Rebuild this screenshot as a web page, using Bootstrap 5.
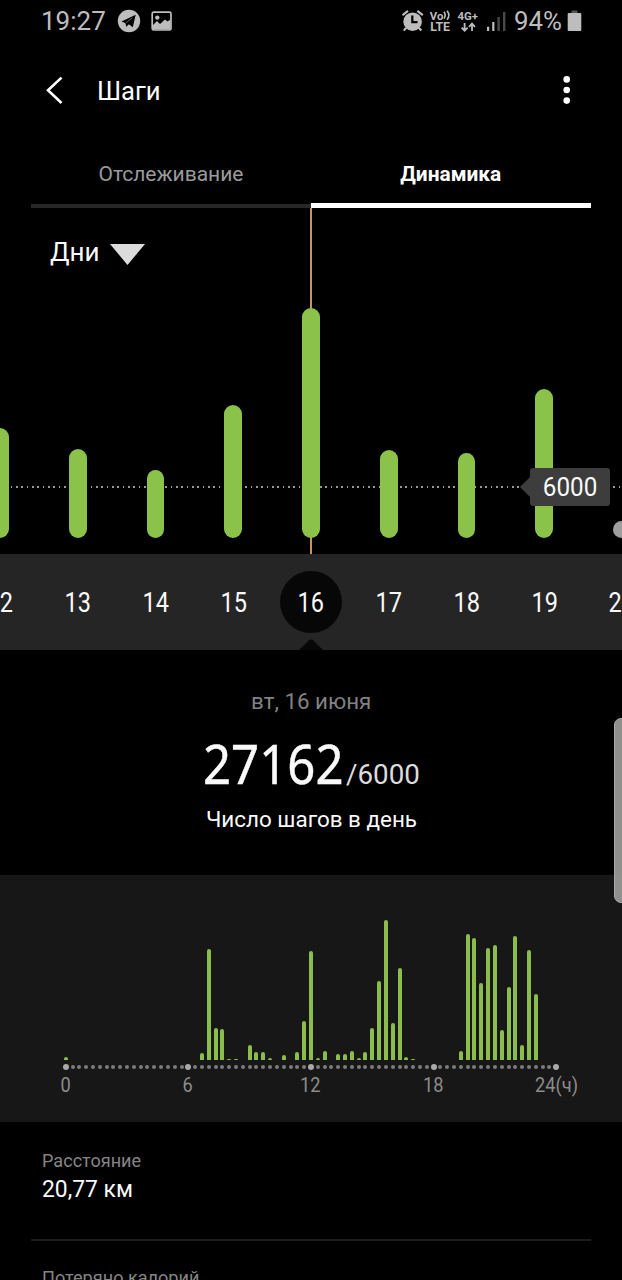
<!DOCTYPE html>
<html lang="ru" data-bs-theme="dark">
<head>
<meta charset="utf-8">
<meta name="viewport" content="width=device-width, initial-scale=1">
<title>Шаги</title>
<link href="https://cdn.jsdelivr.net/npm/bootstrap@5.3.0/dist/css/bootstrap.min.css" rel="stylesheet">
<style>
  html, body { height: 1280px; overflow: hidden; background: #000; }
  body { width: 622px; font-family: Roboto, "Liberation Sans", sans-serif; color: #fafafa; line-height: 1; }
  .tx { display: inline-block; white-space: nowrap; transform: scaleX(var(--sx, 1)); transform-origin: left center; }
  .txc { transform-origin: center; }
  .sx-date { --sx: .84; }
  .sx-big { --sx: .885; }
  .sx-name { --sx: .978; }
  .sx-val { --sx: .933; }
  .sx-tick { --sx: .91; }
  .status { height: 42px; padding-left: 41px; color: #bdbdbd; }
  .status .clock { font-size: 26px; width: 76px; }
  .status svg { display: block; flex: none; }
  .status .sysicons { margin-left: 229px; }
  .topbar { height: 98px; }
  .topbar h1 { font-size: 26px; font-weight: 400; margin: 2px 0 0 33px; --sx: .985; }
  .topbar .back { margin-left: 44px; }
  .topbar .more { margin-right: 50px; }
  .tabs { height: 68px; margin: 0 31px; }
  .tabs .tab { font-size: 21px; padding-top: 4px; color: #9a9a9a; border-bottom: 4px solid #272727; }
  .tabs .tab.on { color: #fff; font-weight: 700; padding-top: 5px; border-bottom: 5px solid #fff; --sx: .995; }
  .daychart { height: 346px; }
  .marker { position: absolute; left: 310px; top: 0; width: 2px; height: 100%; background: #c69464; }
  .period { position: absolute; left: 50px; top: 30px; font-size: 26px; }
  .period svg { margin: 4px 0 0 10px; }
  .goal-line { position: absolute; left: 0; top: 278px; width: 100%; height: 2px;
    background: repeating-linear-gradient(90deg, #999 0 1.6px, transparent 1.6px 5.333px); }
  .daybars { position: absolute; left: -38.875px; bottom: 16px; width: 699.75px; }
  .daybars > div { width: 77.75px; }
  .daybar { width: 17.6px; border-radius: 9px; background: #8bc34a; margin: 0 auto; }
  .daybar.none { background: #9e9e9e; }
  .goal { position: absolute; left: 530px; top: 260px; width: 80px; height: 38px; border-radius: 3px; background: #3d3d3d; font-size: 25px; --sx: .97; }
  .goal::before { content: ""; position: absolute; left: -10px; top: 9px; border: 10px solid transparent; border-left: 0; border-right-color: #3d3d3d; }
  .dates { height: 96px; background: #252525; overflow: hidden; }
  .dates .strip { margin-left: -38.875px; width: 699.75px; height: 96px; flex: none; }
  .dates .day { width: 77.75px; height: 62px; font-size: 28px; }
  .dates .day .disc { width: 62px; height: 62px; border-radius: 50%; padding-top: 1px; }
  .dates .on .disc { background: #070707; }
  .notch { position: absolute; left: 299px; bottom: 0; }
  .summary { height: 225px; padding-top: 41px; }
  .summary .when { font-size: 22px; color: #828282; line-height: 22px; --sx: 1.015; }
  .summary .count { height: 60px; margin-top: 20px; width: 216px; margin-left: 203px; }
  .summary .big { font-family: "Noto Sans", sans-serif; font-weight: 400; -webkit-text-stroke: .5px #fafafa; font-size: 55.5px; line-height: 60px; width: 142.6px; }
  .summary .of { font-size: 27.5px; color: #dcdcdc; --sx: 1.01; }
  .summary .cap { font-size: 22px; line-height: 22px; margin-top: 16px; --sx: 1.02; }
  .hours { height: 247px; background: #171717; }
  .hourbars { padding: 36px 0 0 62.3px; height: 185px; }
  .hourbars > i { width: 6.817px; flex: none; display: block; }
  .hourbars b { display: block; width: 4px; margin: 0 auto; border-radius: 2px 2px 0 0; background: #8bbd4c; }
  .axis { height: 14px; padding-left: 62.3px; }
  .axis > i { width: 6.817px; flex: none; }
  .axis b { width: 4px; height: 4px; border-radius: 50%; background: #7c7c7c; }
  .axis i.major b { width: 6px; height: 6px; background: #aaa; }
  .ticks { font-size: 20px; color: #8c8c8c; margin-left: 4px; padding-top: 1px; }
  .ticks > div { width: 122.7px; text-align: center; flex: none; }
  .metric { margin: 0 31px; padding: 27px 11px 0; }
  .metric:first-child { height: 117px; padding-top: 29px; }
  .metric + .metric { border-top: 2px solid #1b1b1b; }
  .metric .name { font-size: 18.5px; line-height: 20px; color: #858585; }
  .metric .val { font-size: 24.5px; line-height: 28px; margin-top: 4px; }
  .edge { position: absolute; left: 613.5px; top: 718px; width: 14px; height: 185px; border-radius: 9px; background: rgba(158,158,156,.9); border: 1px solid #aaa; }
</style>
</head>
<body class="position-relative m-0">
<header>
  <div class="status d-flex align-items-center">
    <span class="clock">19:27</span>
    <svg width="24" height="24" viewBox="0 0 24 24"><circle cx="12" cy="12" r="11.2" fill="#bdbdbd"/><path d="M4.5 12.5 18.7 5.7 15.8 18.2 11.9 15.2 9.4 17.8 8.3 13.9Z" fill="#000"/><path d="M9 13.8 15.4 8.8" stroke="#bdbdbd" stroke-width=".5"/></svg>
    <svg class="ms-2" width="24" height="24" viewBox="0 0 24 24"><rect x="3.2" y="3.2" width="18.8" height="17.8" rx="1.5" fill="none" stroke="#bdbdbd" stroke-width="1.7"/><circle cx="8.3" cy="8.6" r="2.2" fill="#bdbdbd"/><path d="M4 16 8 12 11 15 16 10.5 18.5 12.5 21.5 10.5V20.5H4Z" fill="#bdbdbd"/></svg>
    <svg class="sysicons" width="184" height="30" viewBox="402 6 184 30" fill="#bdbdbd" font-family="Roboto, sans-serif">
      <circle cx="412.6" cy="21.7" r="9.3"/><path d="M402.5 15.2 408 10.8M422.8 15.2 417.3 10.8" stroke="#bdbdbd" stroke-width="2.2"/><path d="M406 28 403.8 30.6M419 28 421.3 30.6" stroke="#bdbdbd" stroke-width="2.2"/><path d="M412.3 15.5V22.2H417.5" fill="none" stroke="#000" stroke-width="2.2"/>
      <text x="429.8" y="19.5" font-size="11.5" font-weight="700" textLength="13.5" lengthAdjust="spacingAndGlyphs">Vo</text>
      <path d="M444 11.8Q446.3 15.2 444 18.6M447 10.8Q450.8 15.2 447 19.8" fill="none" stroke="#bdbdbd" stroke-width="1.6"/>
      <text x="430.2" y="31" font-size="12" font-weight="700" textLength="19.8" lengthAdjust="spacingAndGlyphs">LTE</text>
      <text x="457.5" y="20" font-size="11.5" font-weight="700" textLength="20.5" lengthAdjust="spacingAndGlyphs">4G+</text>
      <path d="M464.6 23V30M461.6 27.6 464.6 30.8 467.6 27.6M472 31V24M469 26.8 472 23.6 475 26.8" fill="none" stroke="#bdbdbd" stroke-width="1.8"/>
      <path d="M487 26.8h2.2v4.2H487ZM492.2 22h2.2v9h-2.2Z"/><path d="M497.4 17h2.4v14h-2.4ZM503 12h2.4v19H503Z" fill="#494949"/>
      <text x="514" y="30.3" font-size="26" textLength="48" lengthAdjust="spacingAndGlyphs">94%</text>
      <path d="M571.5 10.5h6V13h-6Z" fill="#555"/><rect x="567.7" y="13" width="13.6" height="18" rx="1"/>
    </svg>
  </div>
  <nav class="topbar d-flex align-items-center">
    <svg class="back" width="20" height="30" viewBox="0 0 20 30"><path d="M17.5 1.6 4 14.3 17.5 27" fill="none" stroke="#fff" stroke-width="2.6"/></svg>
    <h1><span class="tx">Шаги</span></h1>
    <svg class="more ms-auto" width="10" height="30" viewBox="0 0 10 30" fill="#fff"><circle cx="4.7" cy="3.4" r="3.3"/><circle cx="4.7" cy="14" r="3.3"/><circle cx="4.7" cy="24.6" r="3.3"/></svg>
  </nav>
  <div class="tabs row g-0">
    <div class="tab col-6 d-flex align-items-center justify-content-center"><span class="tx txc">Отслеживание</span></div>
    <div class="tab on col-6 d-flex align-items-center justify-content-center"><span class="tx txc">Динамика</span></div>
  </div>
</header>
<main>
  <section class="daychart position-relative overflow-hidden">
    <div class="goal-line"></div>
    <div class="marker"></div>
    <div class="period d-flex align-items-center"><span class="tx">Дни</span><svg width="36" height="24" viewBox="0 0 36 24"><path d="M0 2H35L17.5 23Z" fill="#dcdcdc"/></svg></div>
    <div class="daybars d-flex align-items-end" id="daybars"></div>
    <div class="goal d-flex align-items-center justify-content-center"><span class="tx txc">6000</span></div>
  </section>
  <section class="dates position-relative">
    <div class="strip d-flex align-items-center" id="dates"></div>
    <svg class="notch" width="24" height="11" viewBox="0 0 24 11"><path d="M0 11 10 1.2Q12 -.4 14 1.2L24 11Z" fill="#070707"/></svg>
  </section>
  <section class="summary text-center">
    <div class="when"><span class="tx txc">вт, 16 июня</span></div>
    <div class="count d-flex align-items-baseline"><span class="big text-start"><span class="tx sx-big">27162</span></span><span class="of tx">/6000</span></div>
    <div class="cap"><span class="tx txc">Число шагов в день</span></div>
  </section>
  <section class="hours">
    <div class="hourbars d-flex align-items-end" id="hourbars"></div>
    <div class="axis d-flex align-items-center" id="axis"></div>
    <div class="ticks d-flex"><div><span class="tx txc sx-tick">0</span></div><div><span class="tx txc sx-tick">6</span></div><div><span class="tx txc sx-tick">12</span></div><div><span class="tx txc sx-tick">18</span></div><div><span class="tx txc sx-tick">24(ч)</span></div></div>
  </section>
  <section>
    <div class="metric"><div class="name"><span class="tx sx-name">Расстояние</span></div><div class="val"><span class="tx sx-val">20,77 км</span></div></div>
    <div class="metric"><div class="name"><span class="tx sx-name">Потеряно калорий</span></div></div>
  </section>
</main>
<div class="edge"></div>
<script src="https://cdn.jsdelivr.net/npm/bootstrap@5.3.0/dist/js/bootstrap.bundle.min.js"></script>
<script>
  const days = [['12',110],['13',89],['14',68],['15',133.3],['16',229.6],['17',88.3],['18',85],['19',149.5],['20',17.5]];
  document.getElementById('daybars').innerHTML = days.map(([d,h]) =>
    `<div><div class="daybar${d === '20' ? ' none' : ''}" style="height:${h}px"></div></div>`).join('');
  document.getElementById('dates').innerHTML = days.map(([d]) =>
    `<div class="day d-flex justify-content-center${d === '16' ? ' on' : ''}"><span class="disc d-flex align-items-center justify-content-center"><span class="tx txc sx-date">${d}</span></span></div>`).join('');
  // steps per 20-minute slot, in pixels of bar height
  const slots = {0:3.5,20:7.5,21:111.5,22:32,23:31.5,24:1,25:1,27:15,28:8.5,29:8.5,30:2.5,32:4.7,34:8.5,35:39,36:109.5,37:2,38:9.5,40:6.5,41:6,42:9.5,43:2.5,44:8,45:32.5,46:79.5,47:140,48:37,49:92.5,50:3,51:1,58:9.5,59:126.5,60:122.5,61:77,62:112.5,63:115,64:30,65:73,66:124.5,67:15.5,68:110.5,69:66.5};
  let bars = '', dots = '';
  for (let i = 0; i <= 72; i++) {
    bars += `<i>${slots[i] ? `<b style="height:${slots[i]}px"></b>` : ''}</i>`;
    dots += `<i class="d-flex justify-content-center${i % 18 ? '' : ' major'}"><b></b></i>`;
  }
  document.getElementById('hourbars').innerHTML = bars;
  document.getElementById('axis').innerHTML = dots;
</script>
</body>
</html>
